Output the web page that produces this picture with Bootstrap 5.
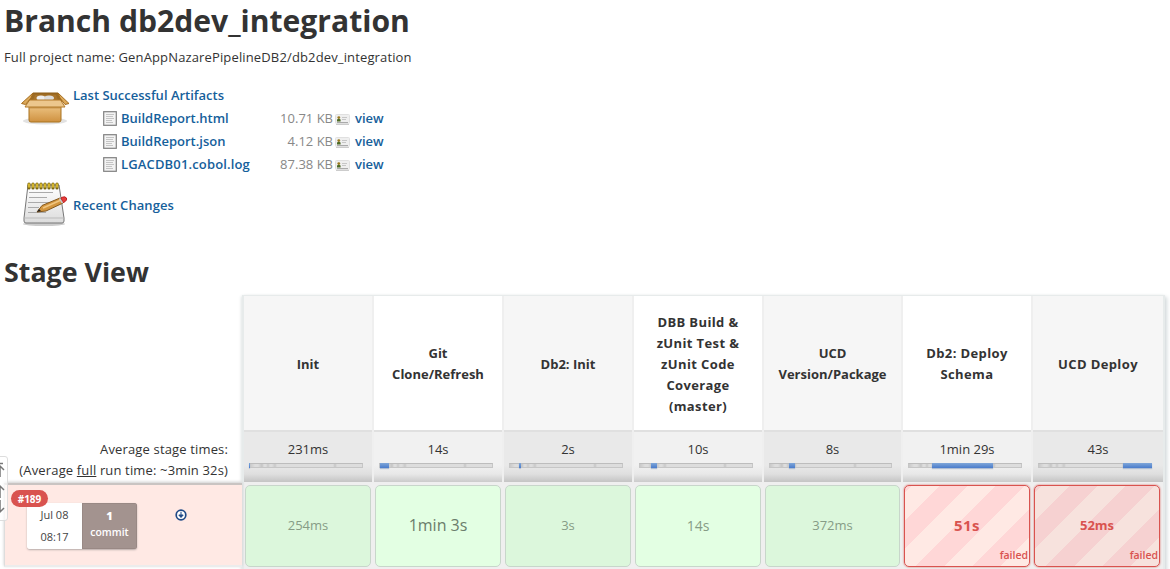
<!DOCTYPE html>
<html lang="en">
<head>
<meta charset="utf-8">
<meta name="viewport" content="width=device-width, initial-scale=1">
<title>Branch db2dev_integration</title>
<link href="https://cdn.jsdelivr.net/npm/bootstrap@5.3.0/dist/css/bootstrap.min.css" rel="stylesheet">
<style>
body{font-family:"Open Sans","Noto Sans",sans-serif;font-size:13px;line-height:21px;color:#333;background:#fff;overflow:hidden;height:569px}
a{color:#15609b;text-decoration:none;font-weight:600}
h1,h2{font-weight:700;margin:0;color:#333;white-space:nowrap}
h1{font-size:30.1px;line-height:42px}
h2{font-size:26.8px;line-height:36px}
.t{white-space:nowrap;display:inline-block}
.page{padding-left:4px}
.project{height:21px;margin-top:5px;letter-spacing:.14px}
.artifacts{margin-top:16px;height:92px}
.bigicon{width:69px;flex:none}
.filerow{height:23px;padding-left:30px;line-height:23px}
.filename{width:153px}
.filesize{width:59px;color:#888;text-align:right}
.cardicon{margin:2px 5px 0 2px}
.changes{height:50px;margin-top:2px}
.stagetitle{margin-top:26px;height:36px}
.stages{margin-top:5px;display:grid;grid-template-columns:238px 923px;grid-template-rows:188px 84px}
.avg{text-align:right;padding:0 14px 2px 0;letter-spacing:.15px}
.pipeline{border:1px solid #e7ebeb;border-width:1px 2px 0 2px;box-shadow:2px 2px 4px #d4dadc,-1px 1px 3px #e4e8e8;grid-row:1/3;grid-column:2;height:290px}
.stage{width:130px;flex:none;border-right:2px solid #efefef;background:#fff}
.stage.wide{width:139px}
.stage:last-child{border-right:0}
.stage:nth-child(odd){background:#f6f6f6}
.stagename{height:134px;font-weight:700;text-align:center;border-bottom:2px solid #e0e0e0;box-sizing:content-box}
.stagename .t{padding-top:2px}
.spaced{letter-spacing:.38px}
.average{height:50px;background:linear-gradient(#f1f1f1 0 66%,#e8e8e8 84%,#cbcbcb);text-align:center;padding-top:7px}
.stage:nth-child(odd) .average{background:linear-gradient(#e9e9e9 0 66%,#dfdfdf 84%,#c4c4c4)}
.average .t{display:block}
.meter{height:5px;margin:3px 9px 0 5px;border:1px solid #c6c6c6;border-top-color:#bdbdbd;background:linear-gradient(90deg,#c9c9c9 0,#ddd 5px,#ddd 8px,#c5c5c5 12px,#ddd 14px,#ddd 16px,#c9c9c9 18px,#ddd 20px,#ddd 22px,#c9c9c9 25px,#ddd 27px,#ddd 83px,#c6c6c6 85px,#ddd 87px,#ddd)}
.stage:last-child .meter{margin-right:11px}
.meter i{display:block;height:5px;margin-top:-1px;background:linear-gradient(#7fa6d8,#4a7ccc);box-shadow:0 1px 1px #aebdd3}
.result{height:82px;margin:3px 0 0 1px;width:126px;border:1px solid #c8d6cb;border-radius:5px;background:#e3ffe3;color:#869c86;padding-bottom:2px}
.wide .result{width:135px}
.stage:nth-child(odd) .result{background:#dcf7dc}
.resultwrap{background:#efefef;height:89px;padding-top:.1px}
.failed.result,.stage:nth-child(odd) .failed.result{position:relative;color:#d9534f;font-weight:700;border-color:#d9534f;box-shadow:0 0 2px #d9534f;background:repeating-linear-gradient(-45deg,#ffe9e4 0 20px,#ffd7d7 20px 40px)}
.stage:nth-child(odd) .failed.result{background:repeating-linear-gradient(-45deg,#f7e2dd 0 20px,#f6d1d1 20px 40px)}
.failtag{position:absolute;right:1px;bottom:1px;font-size:10.5px;line-height:19px;font-weight:600}
.run{background:#ffe9e4;border-top:2px solid #c9c4c2;border-bottom:2px solid #ececec;border-left:1px solid #ddd;box-shadow:0 -1px 3px #ccc;position:relative;height:84px}
.runid{position:absolute;left:6px;top:5px;width:37px;height:17px;border-radius:9px;background:#d9534f;color:#fff;font-size:10px;line-height:18px;font-weight:700;text-align:center}
.changebox{margin:18px 0 0 22px;width:110px;height:46px;border-radius:3px;box-shadow:0 1px 2px #b5aaa7;font-size:11px;line-height:22px;text-align:center;overflow:hidden}
.when{width:55px;background:#fff;color:#444;padding-top:1px}
.commits{width:55px;background:#a3938f;color:#fff;border:1px solid #998985;font-size:10.4px;font-weight:600;line-height:16px;padding-top:4px}
.commits b{display:block;font-size:11px}
.scroller{position:absolute;left:-12px;top:456px;width:20px;height:65px;border:1px solid #ddd;border-radius:3px;background:rgba(255,255,255,.7)}
</style>
<script src="https://cdn.jsdelivr.net/npm/bootstrap@5.3.0/dist/js/bootstrap.bundle.min.js"></script>
</head>
<body>
<svg width="0" height="0" class="position-absolute">
<defs>
<linearGradient id="box" x2="0" y2="1"><stop stop-color="#f0c98a"/><stop offset="1" stop-color="#cf9140"/></linearGradient>
<linearGradient id="pad" x2="0" y2="1"><stop stop-color="#fff"/><stop offset="1" stop-color="#dcdcdc"/></linearGradient>
<g id="doc"><rect x=".7" y=".7" width="12.6" height="13.6" fill="#f3f3f3" stroke="#808080" stroke-width="1.2"/><path d="M3 3.5h8M3 5.5h7M3 7.5h8M3 9.5h6M3 11.5h7" stroke="#c4c4c4"/></g>
<g id="card"><rect x=".5" y=".5" width="14" height="9" rx="1" fill="#efefef" stroke="#e0e0e0"/><path d="M1 10.500h13" stroke="#ccc"/><circle cx="3.800" cy="3.600" r="1.400" fill="#9b7a20"/><path d="M2 7.500V5.500q1.800-1.300 3.600 0v2z" fill="#4d6b25"/><path d="M7 3.500h5M7 5.500h4" stroke="#c6c6c6"/><path d="M2 8.500h11" stroke="#aaa"/></g>
</defs>
</svg>
<main class="page">
<h1><span class="t">Branch db2dev_integration</span></h1>
<div class="project"><span class="t">Full project name: GenAppNazarePipelineDB2/db2dev_integration</span></div>
<section class="artifacts d-flex">
 <div class="bigicon"><svg width="50" height="38" viewBox="0 0 50 38" style="margin:6px 0 0 16px"><ellipse cx="25" cy="31" rx="22" ry="3.500" fill="#e2e2e2"/><path d="M13 3h25l5 8H8z" fill="#9c6b24" stroke="#8d5c16"/><path d="M15 5h21l2 5H13z" fill="#a9752c"/><ellipse cx="21" cy="8" rx="4.500" ry="2.600" fill="#eee"/><ellipse cx="29" cy="8" rx="5" ry="2.600" fill="#ddd"/><path d="M9 14h32v16q0 2-2 2H11q-2 0-2-2z" fill="url(#box)" stroke="#a9721f"/><path d="M9.500 15.500h31v3h-31z" fill="#b37d30" opacity=".55"/><path d="M9.500 10h31l4.500 7H5z" fill="#ecc78d" stroke="#b37b2b"/><path d="M13 3L1.500 13.500l4 1L11 8zM38 3l11 10.500-4 1L40 8z" fill="#dda959" stroke="#a56e20"/></svg></div>
 <div>
  <div style="line-height:22px;height:23px"><a href="#" class="t">Last Successful Artifacts</a></div>
  <div class="filerow d-flex align-items-center"><svg class="me-1" width="14" height="15"><use href="#doc"/></svg><div class="filename"><a href="#" class="t">BuildReport.html</a></div><div class="filesize"><span class="t">10.71 KB</span></div><svg class="cardicon" width="15" height="12"><use href="#card"/></svg><a href="#" class="t">view</a></div>
  <div class="filerow d-flex align-items-center"><svg class="me-1" width="14" height="15"><use href="#doc"/></svg><div class="filename"><a href="#" class="t">BuildReport.json</a></div><div class="filesize"><span class="t">4.12 KB</span></div><svg class="cardicon" width="15" height="12"><use href="#card"/></svg><a href="#" class="t">view</a></div>
  <div class="filerow d-flex align-items-center"><svg class="me-1" width="14" height="15"><use href="#doc"/></svg><div class="filename"><a href="#" class="t" style="letter-spacing:.15px">LGACDB01.cobol.log</a></div><div class="filesize"><span class="t">87.38 KB</span></div><svg class="cardicon" width="15" height="12"><use href="#card"/></svg><a href="#" class="t">view</a></div>
 </div>
</section>
<section class="changes d-flex align-items-center">
 <div class="bigicon"><svg width="48" height="48" viewBox="0 0 48 48" style="margin:2px 0 0 18px"><ellipse cx="22" cy="44" rx="21" ry="2" fill="#ccc"/><path d="M6 5h31l5 33v3q0 2-2 2H4q-2 0-2-2v-3z" fill="url(#pad)" stroke="#777"/><path d="M2.500 38h39" stroke="#bbb"/><path d="M7 12.500h24M7 17.500h18M6 22.500h24M6 27.500h11M6 32.500h18" stroke="#aaa"/><path d="M7 4v4M11 4v4M15 4v4M19 4v4M23 4v4M27 4v4M31 4v4M35 4v4" stroke="#7b6710" stroke-width="3.200" stroke-linecap="round"/><path d="M7 4v3M11 4v3M15 4v3M19 4v3M23 4v3M27 4v3M31 4v3M35 4v3" stroke="#f2cf36" stroke-width="1.500" stroke-linecap="round"/><path d="M15 32l5-6.500 18-7.500 3 5-17 8z" fill="#d3963f" stroke="#85581c"/><path d="M21 28l17-7.500" stroke="#f0c680" stroke-width="1.500"/><path d="M15 32l2-3 2 2z" fill="#222"/><path d="M39 18l1-.700q3-1.300 4.500.700.800 2-1.500 3.700l-2 1z" fill="#e63b3b" stroke="#b22"/><path d="M37.500 18.500l3 4.500" stroke="#ccc" stroke-width="1.500"/></svg></div>
 <a href="#" class="t mt-1" style="letter-spacing:.08px">Recent Changes</a>
</section>
<h2 class="stagetitle"><span class="t">Stage View</span></h2>
<section class="stages">
 <div class="avg d-flex flex-column justify-content-end align-items-end"><span class="t">Average stage times:</span><span class="t">(Average <u>full</u> run time: ~3min 32s)</span></div>
 <div class="run"><span class="runid">#189</span>
  <div class="d-flex"><div class="changebox d-flex"><div class="when"><div><span class="t">Jul 08</span></div><div><span class="t">08:17</span></div></div><div class="commits"><b>1</b><span class="t">commit</span></div></div>
  <svg width="12" height="12" viewBox="0 0 12 12" style="margin:24px 0 0 38px"><circle cx="6" cy="6" r="4.800" fill="#fff" stroke="#204a87" stroke-width="1.700"/><path d="M6 2.800v5M3.800 6L6 8.500 8.200 6z" stroke="#204a87" fill="#204a87"/></svg></div>
 </div>
 <div class="pipeline d-flex">
  <div class="stage"><div class="stagename d-flex align-items-center justify-content-center"><span class="t">Init</span></div><div class="average"><span class="t">231ms</span><div class="meter"><i style="width:1px;margin-left:-1px"></i></div></div><div class="resultwrap"><div class="result d-flex align-items-center justify-content-center"><span class="t">254ms</span></div></div></div>
  <div class="stage"><div class="stagename d-flex align-items-center justify-content-center"><span class="t">Git<br>Clone/Refresh</span></div><div class="average"><span class="t">14s</span><div class="meter"><i style="width:9px;margin-left:0px"></i></div></div><div class="resultwrap"><div class="result d-flex align-items-center justify-content-center"><span class="t" style="font-size:16px;color:#6b7d6b">1min 3s</span></div></div></div>
  <div class="stage"><div class="stagename d-flex align-items-center justify-content-center"><span class="t">Db2: Init</span></div><div class="average"><span class="t">2s</span><div class="meter"><i style="width:2px;margin-left:9px"></i></div></div><div class="resultwrap"><div class="result d-flex align-items-center justify-content-center"><span class="t">3s</span></div></div></div>
  <div class="stage"><div class="stagename d-flex align-items-center justify-content-center"><span class="t spaced">DBB Build &amp;<br>zUnit Test &amp;<br>zUnit Code<br>Coverage<br>(master)</span></div><div class="average"><span class="t">10s</span><div class="meter"><i style="width:6px;margin-left:11px"></i></div></div><div class="resultwrap"><div class="result d-flex align-items-center justify-content-center"><span class="t" style="font-size:14px">14s</span></div></div></div>
  <div class="stage wide"><div class="stagename d-flex align-items-center justify-content-center"><span class="t">UCD<br>Version/Package</span></div><div class="average"><span class="t">8s</span><div class="meter"><i style="width:6px;margin-left:19px"></i></div></div><div class="resultwrap"><div class="result d-flex align-items-center justify-content-center"><span class="t">372ms</span></div></div></div>
  <div class="stage"><div class="stagename d-flex align-items-center justify-content-center"><span class="t spaced">Db2: Deploy<br>Schema</span></div><div class="average"><span class="t">1min 29s</span><div class="meter"><i style="width:61px;margin-left:23px"></i></div></div><div class="resultwrap"><div class="result failed d-flex align-items-center justify-content-center"><span class="t" style="font-size:15px;letter-spacing:.4px">51s</span><span class="failtag">failed</span></div></div></div>
  <div class="stage"><div class="stagename d-flex align-items-center justify-content-center"><span class="t spaced">UCD Deploy</span></div><div class="average"><span class="t">43s</span><div class="meter"><i style="width:29px;margin-left:84px"></i></div></div><div class="resultwrap"><div class="result failed d-flex align-items-center justify-content-center"><span class="t">52ms</span><span class="failtag">failed</span></div></div></div>
 </div>
</section>
</main>
<div class="scroller"><svg width="20" height="63" fill="none" stroke="#777" stroke-width="1.500"><path d="M6 6.500h8M11 20V9M7 13l4-4 4 4M11 41V29M7 33l4-4 4 4M11 43v12M7 51l4 4 4-4"/></svg></div>
</body>
</html>
